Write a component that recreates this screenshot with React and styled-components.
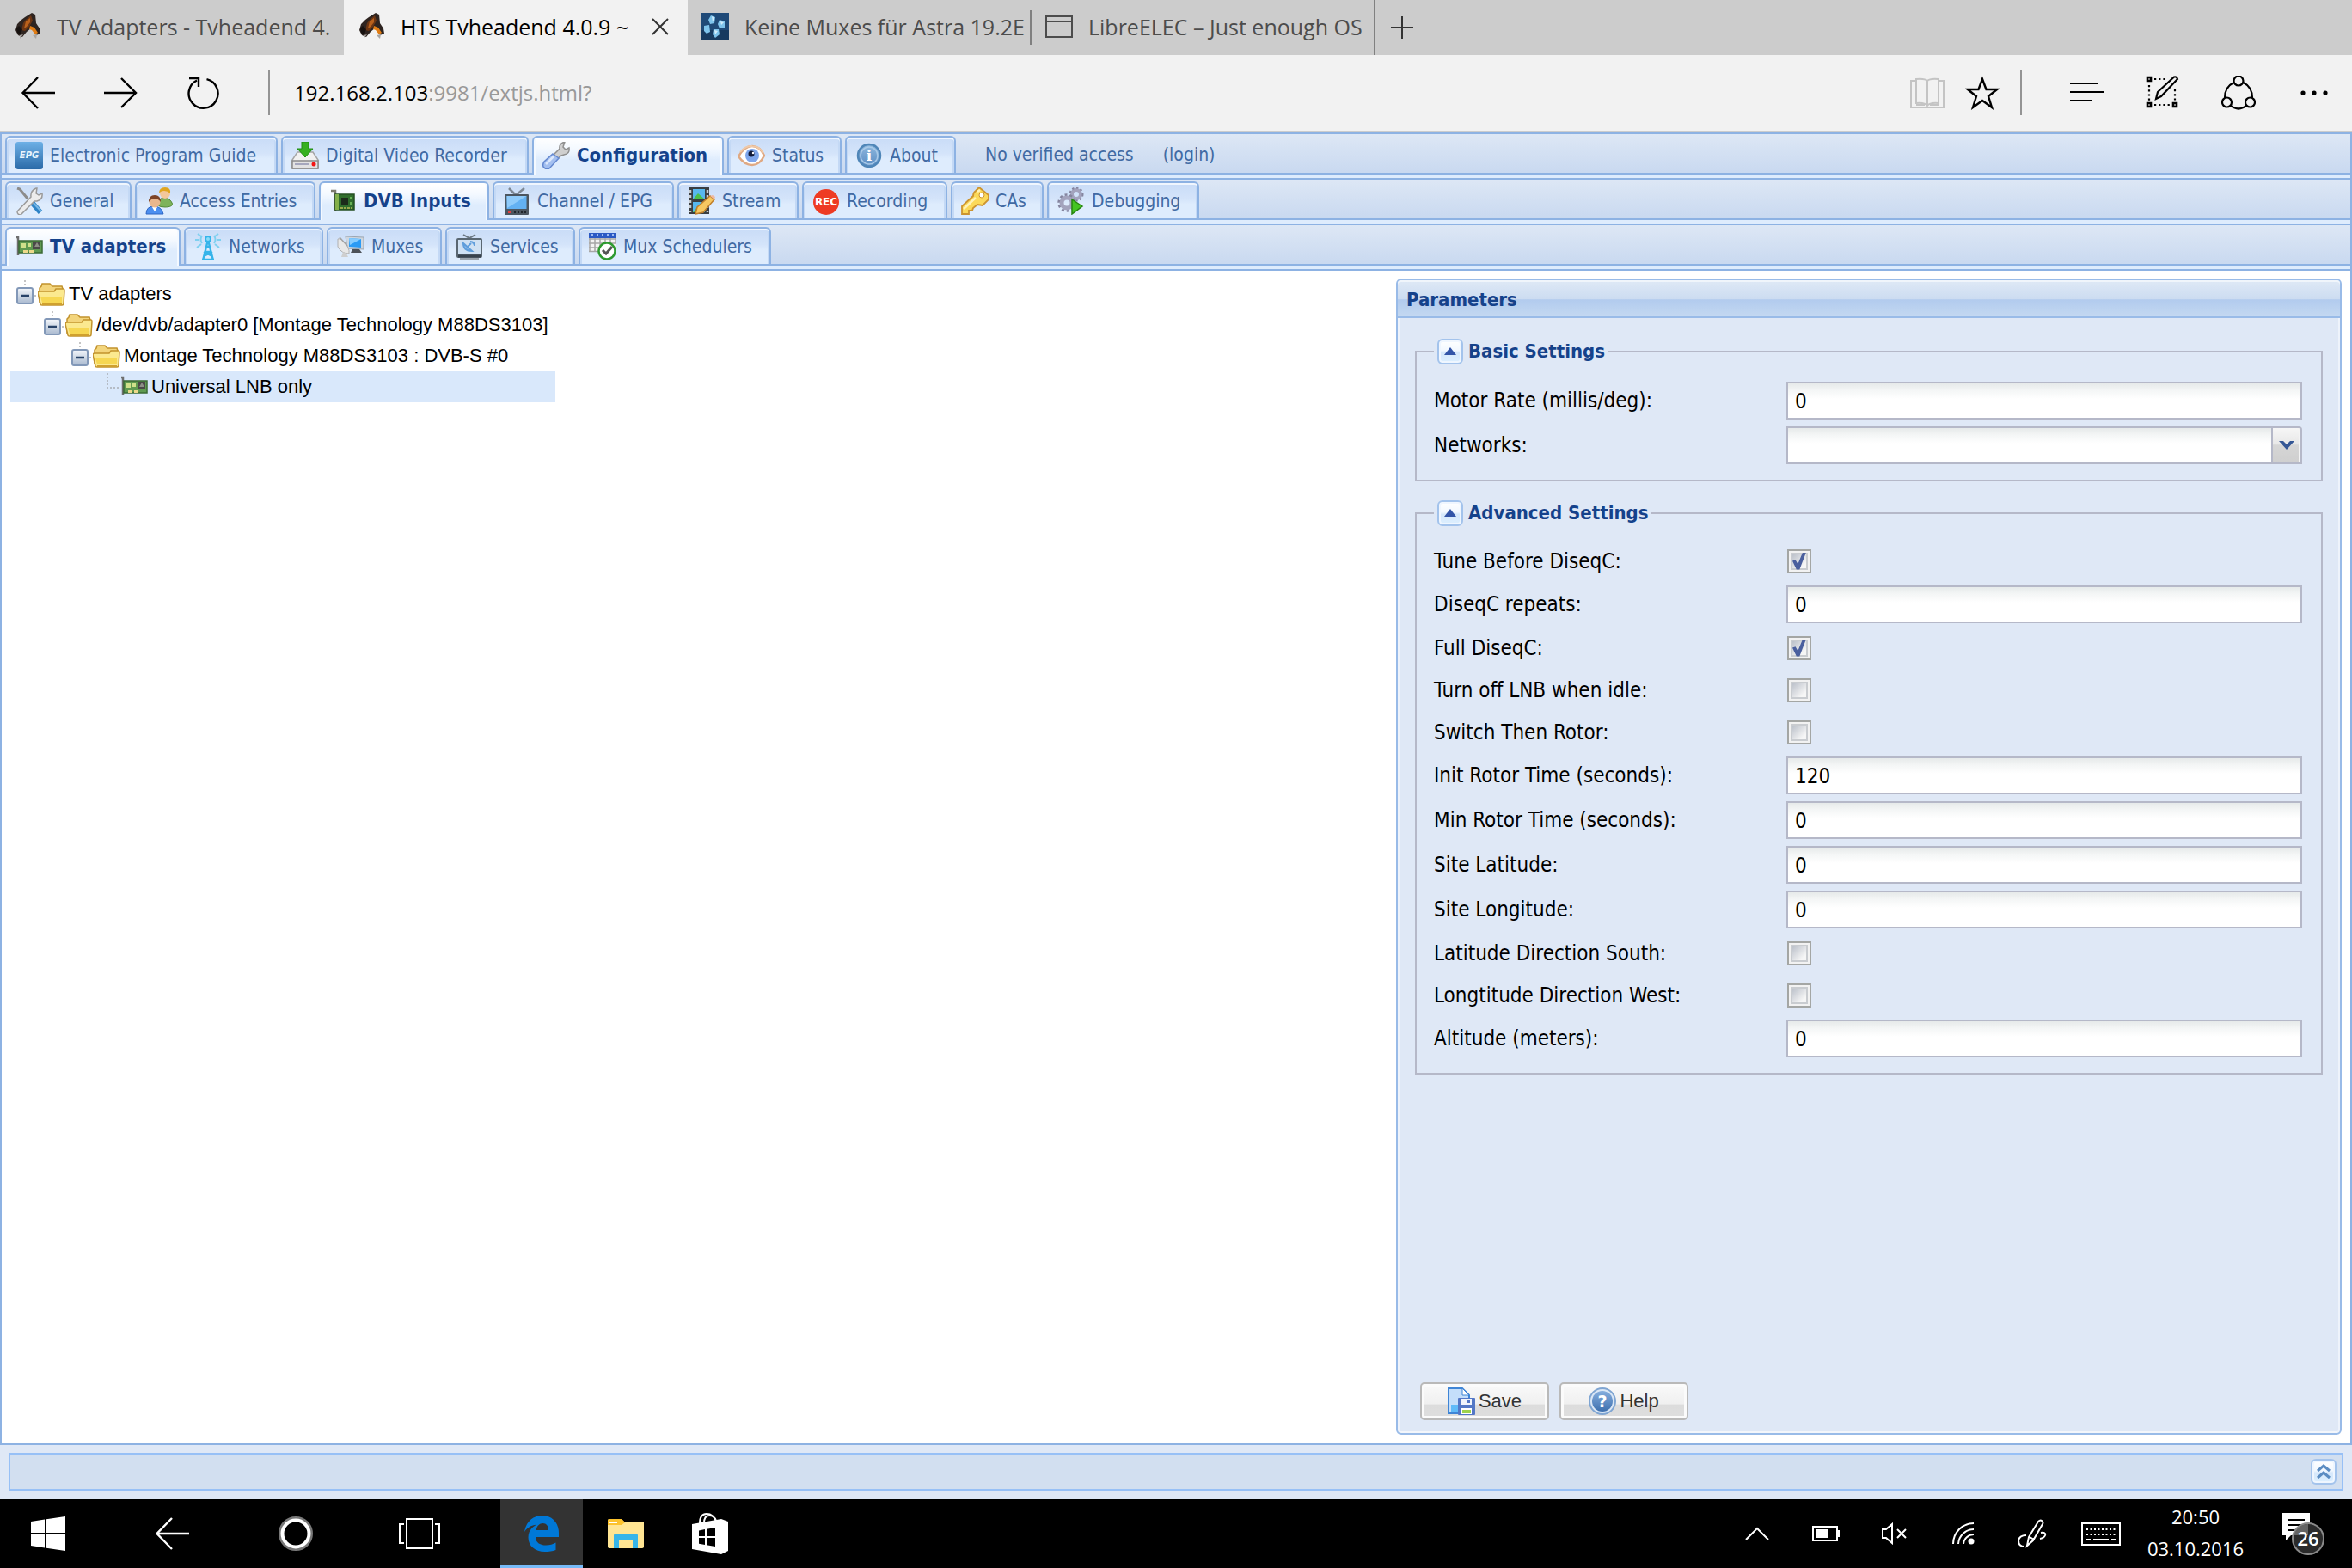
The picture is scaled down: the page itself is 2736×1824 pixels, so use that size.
import React, { useState } from "react";
import styled, { createGlobalStyle, css } from "styled-components";

const segoe = '"Open Sans", "Noto Sans", sans-serif';
const tahoma = '"DejaVu Sans Condensed", "DejaVu Sans", sans-serif';
const arial = '"Liberation Sans", Arial, sans-serif';

const c = {
  line: "#8db2e3",
  frame: "#99bbe8",
  pale: "#deecfd",
  body: "#dfe8f6",
  fieldLine: "#b5b8c8",
  tabText: "#416aa3",
  title: "#15428b",
};

const GlobalStyle = createGlobalStyle`
  *, *::before, *::after { box-sizing: border-box; }
  body { margin: 0; background: #fff; }
  button, input, select { font: inherit; color: inherit; margin: 0; }
  button { border: 0; background: none; padding: 0; }
  svg { display: block; flex: none; }
`;

const Page = styled.div`
  display: flex;
  flex-direction: column;
  min-height: 100vh;
  font-family: ${tahoma};
`;

/* ---------- browser window ---------- */

const TabStrip = styled.nav`
  display: flex;
  height: 64px;
  background: #cccccc;
  font: 25px/34px ${segoe};
`;

const BrowserTab = styled.div`
  display: flex;
  align-items: center;
  flex: 0 0 400px;
  min-width: 0;
  padding: 0 8px 2px 16px;
  background: ${(p) => (p.$active ? "#f2f2f2" : "transparent")};
  color: ${(p) => (p.$active ? "#000" : "#4c4c4c")};
`;

const BrowserTabTitle = styled.span`
  flex: 1;
  min-width: 0;
  margin-left: 18px;
  overflow: hidden;
  white-space: nowrap;
`;

const CloseTab = styled.button`
  display: grid;
  place-items: center;
  width: 48px;
  height: 32px;
`;

const StripDivider = styled.span`
  flex: none;
  width: 2px;
  margin-left: -2px;
  height: ${(p) => (p.$full ? "64px" : "40px")};
  align-self: center;
  background: #808080;
`;

const NewTab = styled.button`
  display: grid;
  place-items: center;
  width: 62px;
  height: 64px;
`;

const AddressBar = styled.header`
  display: flex;
  align-items: center;
  height: 90px;
  padding: 0 24px;
  background: #f2f2f2;
  border-bottom: 2px solid #cccccc;
`;

const NavButtons = styled.div`
  display: flex;
  gap: 56px;
`;

const ActionButtons = styled.div`
  display: flex;
  gap: ${(p) => (p.$tight ? "24px" : "48px")};
`;

const BarIcon = styled.button`
  width: 40px;
  height: 40px;
`;

const BarDivider = styled.span`
  width: 2px;
  height: 52px;
  margin: 0 ${(p) => (p.$wide ? "56px" : "28px")} 0 ${(p) => (p.$wide ? "24px" : "56px")};
  background: #949494;
`;

const Url = styled.div`
  flex: 1;
  font: 24px/34px ${segoe};
  color: #999;
  b { font-weight: 400; color: #000; }
`;

/* ---------- web application ---------- */

const AppFrame = styled.div`
  flex: 1;
  display: flex;
  flex-direction: column;
  border: 2px solid ${c.line};
`;

const TabBar = styled.nav`
  display: flex;
  align-items: flex-end;
  gap: 4px;
  height: 47px;
  padding: 0 4px;
  background: linear-gradient(#dde7f5, #c9d9f0);
  border-bottom: 2px solid ${c.line};
  font-size: 21px;
  line-height: 28px;
  color: ${c.tabText};
`;

const TabGap = styled.div`
  height: 6px;
  background: ${c.pale};
  border-bottom: 2px solid ${c.line};
`;

const activeTab = css`
  height: 45px;
  margin-bottom: -2px;
  padding-bottom: 2px;
  background: linear-gradient(#ffffff, #f4f9ff 30%, ${c.pale} 60%);
  box-shadow: inset 2px 0 #f4f9ff, inset -2px 0 #f4f9ff;
  color: ${c.title};
  font-weight: 700;
  font-size: 22px;
`;

const Tab = styled.button`
  display: flex;
  align-items: center;
  gap: 8px;
  flex: 0 0 ${(p) => p.$width}px;
  height: 43px;
  padding: 0 0 0 10px;
  border: 2px solid ${c.line};
  border-bottom: 0;
  border-radius: 6px 6px 0 0;
  box-shadow: inset 0 2px #f0f6fe, inset 2px 0 #c4d9f5, inset -2px 0 #c4d9f5;
  background: linear-gradient(#c9dcf7, #d4e4fa 45%, ${c.pale} 60%);
  white-space: nowrap;
  ${(p) => p.$active && activeTab}
`;

const AccessNote = styled.div`
  display: flex;
  gap: 34px;
  align-items: center;
  height: 43px;
  padding-left: 30px;
  a { color: inherit; text-decoration: none; }
`;

const Workspace = styled.main`
  flex: 1;
  display: grid;
  grid-template-columns: minmax(0, 1600fr) minmax(0, 1100fr);
  gap: 12px;
  padding: 9px 10px 10px;
  background: #fff;
`;

const Tree = styled.ul`
  list-style: none;
  align-self: start;
  justify-self: start;
  margin: 0;
  padding: 0;
  font: 22px/36px ${arial};
`;

const TreeRow = styled.li`
  display: flex;
  align-items: center;
  height: 36px;
  padding: 0 8px 0 ${(p) => p.$depth * 32}px;
  white-space: nowrap;
  background: ${(p) => (p.$selected ? "#d9e8fb" : "transparent")};
  svg + span { margin-left: 4px; }
`;

const Panel = styled.section`
  display: flex;
  flex-direction: column;
  border: 2px solid ${c.frame};
  border-radius: 6px;
  background: ${c.body};
  box-shadow: inset 2px 0 #eef3fb, inset -2px 0 #eef3fb, inset 0 -2px #f3f6fb;
`;

const PanelTitle = styled.h1`
  margin: 0;
  padding: 0 10px;
  height: 44px;
  border-bottom: 2px solid ${c.frame};
  border-radius: 4px 4px 0 0;
  box-shadow: inset 0 2px #f0f5fb;
  background: linear-gradient(#dfe9f6, #ccdcf1 52%, #b2cbee 54%, #c3d8f1);
  font-size: 22px;
  line-height: 46px;
  font-weight: 700;
  color: ${c.title};
`;

const Form = styled.form`
  flex: 1;
  display: flex;
  flex-direction: column;
  gap: 22px;
  padding: 24px 20px 15px;
`;

const Group = styled.fieldset`
  min-width: 0;
  margin: 0;
  padding: 20px 22px 18px 20px;
  border: 2px solid ${c.fieldLine};
`;

const GroupTitle = styled.legend`
  display: flex;
  align-items: center;
  gap: 6px;
  height: 30px;
  padding: 0 4px;
  font-size: 22px;
  line-height: 30px;
  font-weight: 700;
  color: ${c.title};
`;

const ToolButton = styled.button`
  display: grid;
  place-items: center;
  width: 30px;
  height: 30px;
  border: 2px solid #a3c3ec;
  border-radius: 6px;
  box-shadow: inset 0 0 0 2px #eff6ff;
  background: linear-gradient(#fff, #f2f8ff 45%, #d6e8fb 55%, #dcefff);
`;

const Fields = styled.div`
  display: flex;
  flex-direction: column;
  gap: 8px;
`;

const Row = styled.div`
  display: flex;
  align-items: center;
  height: ${(p) => (p.$check ? "41px" : "44px")};
  font-size: 24px;
  line-height: 30px;
  label { flex: 0 0 410px; }
`;

const fieldBox = css`
  flex: 1;
  min-width: 0;
  height: 44px;
  border: 2px solid ${c.fieldLine};
  border-radius: 0;
  background: linear-gradient(#e6eaea, #f4f6f6 8px, #fff 18px);
  outline: 0;
`;

const TextField = styled.input`
  ${fieldBox}
  padding: 2px 8px 0;
`;

const DropDown = styled.select`
  ${fieldBox}
  appearance: none;
  padding: 0 8px;
`;

const Trigger = styled.span`
  display: grid;
  place-items: center;
  width: 34px;
  height: 44px;
  border: 2px solid ${c.fieldLine};
  border-left: 0;
  border-top-right-radius: 4px;
  box-shadow: inset -2px 0 #f4f4f4;
  background: linear-gradient(#f6f6f6, #e8e8e8 45%, #d6d6d6 50%, #cfcfcf);
`;

const CheckBox = styled.input`
  appearance: none;
  display: grid;
  place-items: center;
  width: 28px;
  height: 28px;
  margin: 0 0 0 1px;
  border: 2px solid #a4a6a4;
  box-shadow: inset 0 0 0 2px #f2f2f2, inset 0 0 0 4px #c9ccd0;
  background: linear-gradient(135deg, #bfc4cd 20%, #f6f6f6 70%);
  &:checked::before {
    content: "";
    width: 16px;
    height: 20px;
    background: #4a5f9e;
    clip-path: polygon(0 50%, 22% 44%, 40% 68%, 74% 2%, 100% 0, 52% 100%, 30% 100%);
  }
`;

const Actions = styled.div`
  display: flex;
  gap: 12px;
  margin-top: auto;
  padding-left: 6px;
`;

const ActionButton = styled.button`
  display: flex;
  align-items: center;
  justify-content: center;
  gap: 4px;
  width: 150px;
  height: 44px;
  border: 2px solid #b9b9b9;
  border-radius: 5px;
  box-shadow: inset 0 0 0 3px #fbfbfb;
  background: linear-gradient(#fafafa, #efefef 58%, #dcdcdc 60%, #dedede);
  font: 22px/28px ${arial};
  color: #333;
`;

const Footer = styled.footer`
  padding: 9px 10px 10px;
  background: ${c.body};
`;

const LogBar = styled.div`
  display: flex;
  align-items: center;
  justify-content: flex-end;
  height: 44px;
  padding-right: 6px;
  border: 2px solid #97c0f6;
  background: #d2dff0;
`;

/* ---------- windows taskbar ---------- */

const Taskbar = styled.footer`
  display: flex;
  height: 80px;
  background: #000;
  color: #fff;
`;

const TaskButton = styled.button`
  display: grid;
  place-items: center;
  width: ${(p) => p.$width}px;
  height: 80px;
`;

const AppButton = styled(TaskButton)`
  background: ${(p) => (p.$open ? "#333" : "transparent")};
  box-shadow: ${(p) => (p.$open ? "inset 0 -4px #76b9f7" : "none")};
`;

const StartGroup = styled.div`
  display: flex;
  gap: ${(p) => p.$gap}px;
`;

const Pinned = styled.div`
  display: flex;
  gap: 2px;
  margin-left: 22px;
`;

const Tray = styled.div`
  display: flex;
  margin-left: auto;
`;

const Clock = styled.time`
  display: flex;
  flex-direction: column;
  justify-content: center;
  width: 140px;
  height: 80px;
  padding-bottom: 2px;
  text-align: center;
  font: 22px/37px ${segoe};
`;

/* ---------- drawings ---------- */

const Ico = ({ s = 32, w, h, box, children, ...r }) => (
  <svg width={w || s} height={h || s} viewBox={box || `0 0 ${w || s} ${h || s}`} fill="none" aria-hidden="true" {...r}>
    {children}
  </svg>
);

const Grad = ({ id, a, b }) => (
  <linearGradient id={id} x1="0" y1="0" x2="0" y2="1">
    <stop offset="0" stopColor={a} />
    <stop offset="1" stopColor={b} />
  </linearGradient>
);

const Hawk = () => (
  <Ico>
    <path d="M13 5l8-5 4 2 1 10 4 6 1 6-5 2-2-4-4-4-5 4-5 6-5-2-3-6 2-7 5-5z" fill="#2e2420" />
    <path d="M14 8l6-5 2 6-4 7-5 5-4-1 2-8z" fill="#6b3513" />
    <path d="M19 15l5 2 4 6-3 2-4-5-3-1z" fill="#e07c14" />
    <path d="M14 10l5-4 0 5-4 5-3 2z" fill="#b9611c" />
    <path d="M3 18l3-3 4 4-2 6-4-2z" fill="#16110f" />
    <path d="M7 26l4-1-4 5zM22 26l5-1-1 5z" fill="#a9a5a2" />
  </Ico>
);
const Kodi = () => (
  <Ico>
    <rect width="32" height="32" fill="#1f4a78" />
    <rect y="20" width="32" height="12" fill="#173a5f" />
    <g fill="#7fc4ec">
      <path d="M11 3l5 2-1 7-5 1-2-5z" />
      <path d="M21 8l6 2v7l-6 1-2-5z" />
      <path d="M3 15l6-1 1 8-4 2-3-3z" />
      <path d="M14 19l6 0 1 6-5 4-3-4z" />
    </g>
    <path d="M12 4l3 2-2 4zM22 10l4 1-3 3zM15 20l4 1-3 4z" fill="#d3edfb" />
  </Ico>
);
const BlankPage = () => (
  <Ico stroke="#4c4c4c" strokeWidth="2">
    <path d="M1 4h30v24H1zM1 10h30" />
  </Ico>
);
const CloseIcon = () => <Ico s={20} stroke="#333" strokeWidth="2"><path d="M1 1l18 18M19 1L1 19" /></Ico>;
const PlusIcon = () => <Ico s={26} stroke="#333" strokeWidth="2"><path d="M13 0v26M0 13h26" /></Ico>;
const ArrowLeft = ({ color = "#000" }) => (
  <Ico s={40} stroke={color} strokeWidth="2.4"><path d="M40 20H3M20 2L2.500 20 20 38" /></Ico>
);
const ArrowRight = () => <Ico s={40} stroke="#000" strokeWidth="2.4"><path d="M1 20h37M21 3l17 17-17 17" /></Ico>;
const Reload = () => (
  <Ico s={40} stroke="#000" strokeWidth="2.4">
    <path d="M24.500 4.200A17 17 0 1 1 13 5.500" />
    <path d="M4 3h11v10" />
  </Ico>
);
const Book = () => (
  <Ico s={40} stroke="#c4c4c4" strokeWidth="2">
    <path d="M6 6H1v31h38V6h-5" />
    <path d="M20 6q-3-3-13-2v28q10-1 13 3 3-4 13-3V4Q23 3 20 6v29M7 34h10M23 34h10" />
  </Ico>
);
const Star = () => (
  <Ico s={40} stroke="#000" strokeWidth="2.4">
    <path d="M20 4l4.500 12H37l-10 8 4 13-11-8-11 8 4-13-10-8h12.500z" />
  </Ico>
);
const HubIcon = () => <Ico s={40} stroke="#000" strokeWidth="2"><path d="M0 9h32M0 19h40M0 29h25" /></Ico>;
const WebNote = () => (
  <Ico s={40} stroke="#000">
    <path d="M2 2h4v4H2zM2 32h4v4H2zM32 32h4v4h-4z" strokeWidth="2.6" />
    <path d="M10 4h14M4 11v18M34 16v14M10 34h20" strokeWidth="2.2" strokeDasharray="2.2 3" />
    <path d="M12 27l2-8L33 1.500q3-1 4 2.500L18 24z" strokeWidth="2.200" />
  </Ico>
);
const Share = () => (
  <Ico s={40} stroke="#000" strokeWidth="2.2">
    <circle cx="20" cy="6" r="5.500" /><circle cx="6.500" cy="31" r="5.500" /><circle cx="33.500" cy="31" r="5.500" />
    <path d="M14.500 8Q4 13 4 26M25.500 8Q36 13 36 26M11 35q9 7 18 0" />
  </Ico>
);
const Dots = () => (
  <Ico s={40} fill="#000"><circle cx="7" cy="20" r="2.600" /><circle cx="20" cy="20" r="2.600" /><circle cx="33" cy="20" r="2.600" /></Ico>
);

const EpgIcon = () => (
  <Ico>
    <defs><Grad id="epg" a="#6db0e6" b="#2a6aa8" /></defs>
    <rect width="32" height="32" rx="3" fill="url(#epg)" />
    <text x="16" y="18.500" textAnchor="middle" fontFamily="DejaVu Sans" fontWeight="700" fontStyle="italic" fontSize="10" fill="#eaf4fc">EPG</text>
  </Ico>
);
const DvrIcon = () => (
  <Ico>
    <path d="M7 12h18l6 9v9q0 2-2 2H3q-2 0-2-2v-9z" fill="#f1f1f1" stroke="#a5a5a5" strokeWidth="1.500" />
    <path d="M1 22h30v9H1z" fill="#e2e2e2" stroke="#8a8a8a" strokeWidth="1.500" />
    <path d="M4 25h17v2H4z" fill="#a5a7bd" />
    <circle cx="26" cy="26" r="2.500" fill="#f31515" />
    <path d="M12 0h8v8h5l-9 10L7 8h5z" fill="#36b020" stroke="#1f8c12" />
  </Ico>
);
const WrenchIcon = () => (
  <Ico>
    <path d="M13 15l7-7q-1-6 6-8l-2 6 3 3 4-2q1 7-6 8l-3 1-5 4z" fill="#cfcfcf" stroke="#8f8f8f" strokeWidth="1.500" />
    <path d="M12 14l7 5L8 31q-4 2-7-2-1-3 1-6z" fill="#a3bff0" stroke="#6488cf" strokeWidth="1.500" />
    <path d="M13 17L4 26" stroke="#dce8fc" strokeWidth="2.500" />
  </Ico>
);
const EyeIcon = () => (
  <Ico>
    <path d="M1 17Q8 5 17 5t14 11q-5 11-14 11T1 17z" fill="#fff" stroke="#dfa983" strokeWidth="2.500" />
    <path d="M3 12Q9 4 17 5q8 0 13 8" stroke="#efc9a8" strokeWidth="2" />
    <circle cx="17" cy="16" r="8" fill="#7ea6ec" /><circle cx="16" cy="14" r="3.500" fill="#111a3a" /><circle cx="18" cy="13" r="1.200" fill="#fff" />
  </Ico>
);
const AboutIcon = () => (
  <Ico>
    <defs><Grad id="about" a="#8fb9df" b="#5a8cc2" /></defs>
    <circle cx="16" cy="16" r="13" fill="url(#about)" stroke="#4f86b8" strokeWidth="2.500" />
    <circle cx="16" cy="16" r="10" stroke="#a9cae8" strokeWidth="1.500" />
    <text x="16" y="22" textAnchor="middle" fontFamily="DejaVu Serif" fontWeight="700" fontSize="17" fill="#fff">i</text>
  </Ico>
);
const HelpIcon = () => (
  <Ico>
    <defs><Grad id="help" a="#86aede" b="#3d6fae" /></defs>
    <circle cx="16" cy="16" r="15" fill="#dbe7f5" stroke="#7fa5d2" strokeWidth="2" />
    <circle cx="16" cy="16" r="12" fill="url(#help)" />
    <text x="16" y="23" textAnchor="middle" fontFamily="DejaVu Sans" fontWeight="700" fontSize="19" fill="#fff">?</text>
  </Ico>
);
const ToolsIcon = () => (
  <Ico>
    <path d="M2 1l3 1 9 11" stroke="#8c8c8c" strokeWidth="3" />
    <path d="M16 14l13 15" stroke="#2d83c6" strokeWidth="6" />
    <path d="M18 15l12 13" stroke="#79b8e6" strokeWidth="2" />
    <path d="M2 28L18 11q-1-7 6-10l1 0-1 6 3 2 4-2q1 7-6 9l-3 0L6 32q-4 0-4-4z" fill="#ececec" stroke="#9a9a9a" strokeWidth="1.500" />
  </Ico>
);
const UsersIcon = () => (
  <Ico>
    <path d="M15 21q0-9 7-9t10 8q-2 3-9 3-6 0-8-2z" fill="#7db35b" stroke="#558a3a" />
    <circle cx="23" cy="7" r="6" fill="#f3c79a" /><path d="M16 7q0-7 7-7t6 7q-3-3-7-3-4 0-6 3z" fill="#e0a51e" />
    <path d="M1 31q0-9 9-9t11 9z" fill="#4c8ff0" stroke="#2e66c4" />
    <path d="M8 23l3 5 3-5z" fill="#fff" />
    <circle cx="11" cy="17" r="6.500" fill="#eab78d" /><path d="M4 17q0-8 7-8t7 8q-3-4-7-4t-7 4z" fill="#7e4425" />
  </Ico>
);
const CardIcon = () => (
  <Ico>
    <path d="M1 5h2v21" stroke="#6f6f6f" strokeWidth="2.500" />
    <rect x="4" y="9" width="27" height="14" fill="#5f9a50" stroke="#3b6a35" strokeWidth="1.500" />
    <rect x="20" y="10" width="9" height="9" fill="#4a4a48" />
    <path d="M22 16l3-5 3 5z" fill="#8d8f86" />
    <path d="M7 12h5v5H7zM14 12h4v4h-4z" fill="#cfe08a" />
    <path d="M9 21.500h14" stroke="#ecd98a" strokeWidth="3" strokeDasharray="5 2" />
  </Ico>
);
const PciIcon = () => (
  <Ico>
    <path d="M2 4h5v24" stroke="#7c7a6c" strokeWidth="2.500" />
    <rect x="7" y="8" width="22" height="18" fill="#2f6d2c" stroke="#244f22" strokeWidth="1.500" />
    <rect x="7" y="8" width="4" height="18" fill="#83b04a" />
    <rect x="14" y="12" width="8" height="9" fill="#1c2b1b" />
    <path d="M24 11h3v3h-3zM24 17h3v3h-3z" fill="#68b255" />
    <path d="M13 24h14" stroke="#98a94c" strokeWidth="2" strokeDasharray="3 1" />
  </Ico>
);
const TvIcon = () => (
  <Ico>
    <path d="M7 1l8 8L25 1" stroke="#7d8894" strokeWidth="2.500" />
    <rect x="2" y="8" width="28" height="24" rx="1" fill="#4c5660" />
    <rect x="4.500" y="10" width="23" height="15" fill="#63b1f2" /><path d="M4.500 10h23L5 24z" fill="#8fcbfa" />
    <path d="M6 29h4" stroke="#e24040" strokeWidth="2" /><path d="M13 29h14" stroke="#20262c" strokeWidth="2" strokeDasharray="2 2" />
  </Ico>
);
const FilmIcon = () => (
  <Ico>
    <rect x="1" y="0" width="24" height="31" fill="#3b3f42" />
    <path d="M3 3v26M23 3v26" stroke="#c9ced2" strokeWidth="2.500" strokeDasharray="3 3" />
    <rect x="6" y="2" width="14" height="12" fill="#58b8ee" /><rect x="6" y="17" width="14" height="12" fill="#58b8ee" />
    <path d="M6 14l6-7 8 7zM6 29l6-7 8 7z" fill="#4cc04a" />
    <path d="M9 31l2-8L26 10l5 4-13 15z" fill="#f7c862" stroke="#c07f2a" strokeWidth="1.500" /><path d="M26 10l5 4 1-3-3-2z" fill="#f0b9a0" />
  </Ico>
);
const RecIcon = () => (
  <Ico>
    <circle cx="16" cy="17" r="15" fill="#ee3b23" />
    <text x="16" y="21" textAnchor="middle" fontFamily="DejaVu Sans" fontWeight="700" fontSize="12" fill="#fff">REC</text>
  </Ico>
);
const KeyIcon = () => (
  <Ico>
    <path d="M1 31v-9l13-12q0-4 3-6l4-4 11 9v5l-7 7-6-1-5 4-1 3H9v4z" fill="#fbd95a" stroke="#cc9430" strokeWidth="1.800" />
    <path d="M3 25L17 12M19 5l3-2" stroke="#fff3b8" strokeWidth="2.500" /><circle cx="24" cy="9" r="3" fill="#fff" stroke="#cc9430" />
  </Ico>
);
const GearsIcon = () => (
  <Ico>
    <circle cx="22" cy="8" r="5" stroke="#a3a3bd" strokeWidth="4" /><circle cx="22" cy="8" r="7.500" stroke="#85859f" strokeWidth="2" strokeDasharray="2.500 2.500" />
    <circle cx="11" cy="18" r="6" stroke="#a3a3bd" strokeWidth="5" /><circle cx="11" cy="18" r="9.500" stroke="#85859f" strokeWidth="2.500" strokeDasharray="3 3" />
    <path d="M17 14l12 8-12 9z" fill="#45c424" stroke="#26850f" strokeWidth="1.500" />
  </Ico>
);
const AntennaIcon = () => (
  <Ico stroke="#35b4ea" strokeWidth="2">
    <path d="M16 8l-6 24M16 8l6 24M12 22h8M13.500 16h5M11 27l10-5M21 27l-10-5M9 31h14" strokeWidth="2.400" />
    <circle cx="16" cy="7" r="3" fill="#8adcf8" />
    <path d="M9 3Q6 8 9 12M23 3q3 5 0 9M4 1l4 3M28 1l-4 3M1 8h5M31 8h-5M3 17l5-4M29 17l-5-4" stroke="#7fd0f0" />
  </Ico>
);
const MuxIcon = () => (
  <Ico>
    <path d="M10 4l21 1v14l-19-1z" fill="#cfd6de" stroke="#9ba6b2" /><path d="M14 6l14 1v10l-14-1z" fill="#2b9bf5" /><path d="M14 6l14 1-13 7z" fill="#86ccff" />
    <path d="M18 19h8l3 4H16z" fill="#4d5259" />
    <path d="M1 7q4-2 11 8 3 6 2 9-9 0-13-8z" fill="#e8e8e8" stroke="#b0b0b0" /><path d="M7 22l-2 6h8l-2-4z" fill="#cfcfcf" />
    <path d="M12 15L3 5" stroke="#a5a5a5" strokeWidth="1.500" />
  </Ico>
);
const ServiceIcon = () => (
  <Ico>
    <path d="M9 2l7 4 7-4" stroke="#6d7983" strokeWidth="2" />
    <rect x="1" y="6" width="30" height="23" rx="2" fill="#5a6772" /><rect x="3" y="8" width="26" height="17" fill="#cfe1f3" />
    <path d="M9 12q0 9 10 9zM14 16l4-4M17 10q5 0 5 5" stroke="#5f9edb" strokeWidth="2" fill="#8dbcec" />
    <path d="M3 27h26" stroke="#38434d" strokeWidth="3" /><path d="M5 30h22" stroke="#9aa3ab" strokeWidth="2" />
  </Ico>
);
const CalendarIcon = () => (
  <Ico>
    <rect x="0" y="0" width="31" height="22" fill="#f3f3f3" />
    <path d="M0 7h31M0 12h31M0 17h22M0 21.500h12M1 6v16M7 6v16M13 6v14M19 6v8M25 6v6M31 6v6" stroke="#a6a6a6" strokeWidth="1.500" />
    <rect width="32" height="6" fill="#2a59c4" /><path d="M3 2h28" stroke="#9dbaf2" strokeWidth="2" strokeDasharray="2 4" />
    <circle cx="21" cy="21" r="9.500" fill="#fff" stroke="#2e9a30" strokeWidth="2.500" /><path d="M16 20l4 4 7-8" stroke="#555" strokeWidth="3" />
  </Ico>
);
const SaveIcon = () => (
  <Ico>
    <path d="M1 1h16l8 8v21H1z" fill="#c4defa" stroke="#3f85d6" strokeWidth="2" /><path d="M17 1l8 8h-8z" fill="#fff" stroke="#3f85d6" />
    <path d="M4 20h9v8H4z" fill="#5fbaf8" />
    <rect x="12" y="12" width="20" height="20" rx="1" fill="#5377c6" /><path d="M16 13h12v7H16z" fill="#f0f4fc" /><path d="M23 14h3v4h-3z" fill="#5377c6" />
    <path d="M16 24h12v7H16z" fill="#fff" /><path d="M17 26h10v4H17z" fill="#9ed24c" />
  </Ico>
);

const Minus = () => (
  <Ico>
    <defs><Grad id="box" a="#f4f7fb" b="#a9b9cf" /></defs>
    <path d="M17 0v8M28 18h4" stroke="#c4c4c4" strokeWidth="2" strokeDasharray="2 2" />
    <rect x="8" y="9" width="18" height="18" rx="2" fill="url(#box)" stroke="#8298b8" strokeWidth="2" />
    <path d="M12 18h10" stroke="#274268" strokeWidth="2.500" />
  </Ico>
);
const Elbow = () => (
  <Ico><path d="M17 0v17h15" stroke="#b5bcc6" strokeWidth="2" strokeDasharray="2 2" /></Ico>
);
const Folder = () => (
  <Ico>
    <path d="M2 25V9l2-2 1-3h9l3 3h11l1 3v6z" fill="#f3d57c" stroke="#c2922c" strokeWidth="1.500" />
    <path d="M3 28L0 15q0-2 2-2h17l2-3h9q1 0 1 2l-1 15q0 2-2 2H5q-2 0-2-1z" fill="#fbe98f" stroke="#c2922c" strokeWidth="1.500" />
    <path d="M3 19h25l0 7H5z" fill="#f6d752" /><path d="M5 28h23" stroke="#cfa02e" strokeWidth="2" />
  </Ico>
);
const TriangleUp = () => <Ico w={16} h={10}><path d="M8 0l7 9H1z" fill="#3355a8" /></Ico>;
const Chevron = () => <Ico w={18} h={12}><path d="M0 1h5l4 4 4-4h5L9 11z" fill="#355795" /></Ico>;
const DoubleUp = () => <Ico w={16} h={18} stroke="#5b8cc2" strokeWidth="3"><path d="M1 8l7-6 7 6M1 16l7-6 7 6" /></Ico>;

const WinLogo = () => (
  <Ico s={40} fill="#fff"><path d="M0 6l16-2.500V19H0zM18 3.200L40 0v19H18zM0 21h16v15.500L0 34zM18 21h22v19l-22-3.200z" /></Ico>
);
const Cortana = () => <Ico s={40}><circle cx="20" cy="20" r="18.500" stroke="#777" strokeWidth="3" /><circle cx="20" cy="20" r="15.500" stroke="#fff" strokeWidth="4" /></Ico>;
const TaskView = () => <Ico w={48} h={36} stroke="#fff" strokeWidth="2"><path d="M9 1h30v34H9zM6 7H1v22h5M42 7h5v22h-5" /></Ico>;
const EdgeIcon = () => (
  <Ico w={40} h={42}>
    <path d="M0 19C2 7 10 0 20.500 0 33 0 40 9 40 20v5H13c0 7 6 9.500 12 9.500 5 0 8-1 11.500-3V40c-4 1.500-8 2-12.500 2C12 42 4.500 35 4.500 25.500 4.500 18 9 13 14.500 10.500 8 11 3 14 0 19zM13.500 17H28c0-5-2.500-8-6.500-8-4 0-7 3-8 8z" fill="#0078d7" />
  </Ico>
);
const Explorer = () => (
  <Ico w={42} h={34}>
    <path d="M0 2q0-2 2-2h14l4 4h22v28q0 2-2 2H2q-2 0-2-2z" fill="#ffe593" /><path d="M0 2q0-2 2-2h14l4 4-4 3H0z" fill="#fcc22d" />
    <path d="M2 3h9v2H2z" fill="#fff" /><path d="M7 34V19q0-2 2-2h24q2 0 2 2v15h-6V24H13v10z" fill="#37b5e9" />
  </Ico>
);
const Store = () => (
  <Ico w={42} h={48}>
    <path d="M9 12Q9 1 17 1t11 9M14 12Q14 3 20 3t8 6" stroke="#fff" strokeWidth="2" />
    <path d="M0 13l34-6 8 3v34l-8 4-34-6z" fill="#fff" />
    <path d="M8 20.500l7-1.500v8H8zM17 18.700l10-1.700v10H17zM8 29h7v8l-7-1.300zM17 29h10v10l-10-1.700z" fill="#000" />
  </Ico>
);
const TrayUp = () => <Ico w={28} h={16} stroke="#fff" strokeWidth="2"><path d="M1 15L14 2l13 13" /></Ico>;
const Battery = () => <Ico w={32} h={20} stroke="#fff" strokeWidth="2"><path d="M1 2h28v16H1z" /><path d="M5 5h13v10H5z" fill="#fff" stroke="none" /><path d="M31 6v8" /></Ico>;
const Mute = () => <Ico w={30} h={26} stroke="#fff" strokeWidth="2"><path d="M1 8h4l7-6v22l-7-6H1zM18 8l10 10M28 8L18 18" /></Ico>;
const Wifi = () => (
  <Ico s={26} stroke="#fff" strokeWidth="2"><path d="M1 25A24 24 0 0 1 25 1M7 25A18 18 0 0 1 25 8M13 25A12 12 0 0 1 25 14" /><circle cx="22" cy="22" r="3.500" fill="#fff" stroke="none" /></Ico>
);
const Pen = () => (
  <Ico w={34} h={34} stroke="#fff" strokeWidth="2"><path d="M11 31l2-10L24 3q3-3 5 0 1 1 0 3L18 25zM14 21l5 3M10 19q-8 0-9 6 0 7 7 7M27 16q6-1 5 3-1 3-6 4" /></Ico>
);
const Keyboard = () => (
  <Ico w={46} h={27} stroke="#fff" strokeWidth="2"><path d="M1 1h44v25H1z" /><path d="M6 8h34M6 14h34" strokeDasharray="2 2.500" /><path d="M6 20h5M14 20h18M35 20h5" /></Ico>
);
const Notices = () => (
  <Ico w={54} h={52}>
    <path d="M2 2h32v26H12l-6 6v-6H2z" fill="#fff" /><path d="M8 10h20M8 16h20M8 22h14" stroke="#000" strokeWidth="2" />
    <circle cx="32" cy="32" r="18" fill="#2b2b2b" stroke="#8a8a8a" strokeWidth="2" />
    <path d="M15 26A18 18 0 0 1 32 15v13H14z" fill="#8a8a8a" opacity=".6" />
    <text x="32" y="40" textAnchor="middle" fontFamily="Open Sans" fontWeight="600" fontSize="22" fill="#fff">26</text>
  </Ico>
);

/* ---------- content ---------- */

const mainTabs = [
  ["Electronic Program Guide", <EpgIcon />, 317],
  ["Digital Video Recorder", <DvrIcon />, 288],
  ["Configuration", <WrenchIcon />, 223, true],
  ["Status", <EyeIcon />, 133],
  ["About", <AboutIcon />, 129],
];
const configTabs = [
  ["General", <ToolsIcon />, 147],
  ["Access Entries", <UsersIcon />, 210],
  ["DVB Inputs", <PciIcon />, 198, true],
  ["Channel / EPG", <TvIcon />, 211],
  ["Stream", <FilmIcon />, 141],
  ["Recording", <RecIcon />, 169],
  ["CAs", <KeyIcon />, 108],
  ["Debugging", <GearsIcon />, 177],
];
const inputTabs = [
  ["TV adapters", <CardIcon />, 204, true],
  ["Networks", <AntennaIcon />, 162],
  ["Muxes", <MuxIcon />, 134],
  ["Services", <ServiceIcon />, 151],
  ["Mux Schedulers", <CalendarIcon />, 224],
];
const treeNodes = [
  "TV adapters",
  "/dev/dvb/adapter0 [Montage Technology M88DS3103]",
  "Montage Technology M88DS3103 : DVB-S #0",
];
const basic = [
  { label: "Motor Rate (millis/deg):", value: "0" },
  { label: "Networks:", kind: "select" },
];
const advanced = [
  { label: "Tune Before DiseqC:", kind: "check", value: true },
  { label: "DiseqC repeats:", value: "0" },
  { label: "Full DiseqC:", kind: "check", value: true },
  { label: "Turn off LNB when idle:", kind: "check", value: false },
  { label: "Switch Then Rotor:", kind: "check", value: false },
  { label: "Init Rotor Time (seconds):", value: "120" },
  { label: "Min Rotor Time (seconds):", value: "0" },
  { label: "Site Latitude:", value: "0" },
  { label: "Site Longitude:", value: "0" },
  { label: "Latitude Direction South:", kind: "check", value: false },
  { label: "Longtitude Direction West:", kind: "check", value: false },
  { label: "Altitude (meters):", value: "0" },
];

const TabRow = ({ tabs, children }) => (
  <>
    <TabBar>
      {tabs.map(([name, icon, width, active]) => (
        <Tab key={name} type="button" $width={width} $active={active}>
          {icon}
          <span>{name}</span>
        </Tab>
      ))}
      {children}
    </TabBar>
    <TabGap />
  </>
);

const Field = ({ id, label, kind, value }) => (
  <Row $check={kind === "check"}>
    <label htmlFor={id}>{label}</label>
    {kind === "check" && <CheckBox id={id} type="checkbox" defaultChecked={value} />}
    {kind === "select" && (
      <>
        <DropDown id={id} defaultValue=""><option value="" /></DropDown>
        <Trigger><Chevron /></Trigger>
      </>
    )}
    {!kind && <TextField id={id} type="text" defaultValue={value} />}
  </Row>
);

const Section = ({ title, name, fields }) => {
  const [open, setOpen] = useState(true);
  return (
    <Group>
      <GroupTitle>
        <ToolButton type="button" aria-label={title} onClick={() => setOpen(!open)}><TriangleUp /></ToolButton>
        {title}
      </GroupTitle>
      {open && <Fields>{fields.map((f, i) => <Field key={f.label} id={`${name}-${i}`} {...f} />)}</Fields>}
    </Group>
  );
};

export default function App() {
  return (
    <Page>
      <GlobalStyle />
      <TabStrip>
        <BrowserTab><Hawk /><BrowserTabTitle>TV Adapters - Tvheadend 4.</BrowserTabTitle></BrowserTab>
        <BrowserTab $active>
          <Hawk /><BrowserTabTitle>HTS Tvheadend 4.0.9 ~</BrowserTabTitle>
          <CloseTab aria-label="Close"><CloseIcon /></CloseTab>
        </BrowserTab>
        <BrowserTab><Kodi /><BrowserTabTitle>Keine Muxes für Astra 19.2E</BrowserTabTitle></BrowserTab>
        <StripDivider />
        <BrowserTab><BlankPage /><BrowserTabTitle>LibreELEC – Just enough OS</BrowserTabTitle></BrowserTab>
        <StripDivider $full />
        <NewTab aria-label="New tab"><PlusIcon /></NewTab>
      </TabStrip>
      <AddressBar>
        <NavButtons>
          <BarIcon aria-label="Back"><ArrowLeft /></BarIcon>
          <BarIcon aria-label="Forward"><ArrowRight /></BarIcon>
          <BarIcon aria-label="Refresh"><Reload /></BarIcon>
        </NavButtons>
        <BarDivider />
        <Url><b>192.168.2.103</b>:9981/extjs.html?</Url>
        <ActionButtons $tight>
          <BarIcon aria-label="Reading view"><Book /></BarIcon>
          <BarIcon aria-label="Favourite"><Star /></BarIcon>
        </ActionButtons>
        <BarDivider $wide />
        <ActionButtons>
          <BarIcon aria-label="Hub"><HubIcon /></BarIcon>
          <BarIcon aria-label="Web note"><WebNote /></BarIcon>
          <BarIcon aria-label="Share"><Share /></BarIcon>
          <BarIcon aria-label="More"><Dots /></BarIcon>
        </ActionButtons>
      </AddressBar>

      <AppFrame>
        <TabRow tabs={mainTabs}>
          <AccessNote><span>No verified access</span><a href="#login">(login)</a></AccessNote>
        </TabRow>
        <TabRow tabs={configTabs} />
        <TabRow tabs={inputTabs} />
        <Workspace>
          <Tree>
            {treeNodes.map((name, depth) => (
              <TreeRow key={name} $depth={depth}><Minus /><Folder /><span>{name}</span></TreeRow>
            ))}
            <TreeRow $depth={3} $selected><Elbow /><CardIcon /><span>Universal LNB only</span></TreeRow>
          </Tree>
          <Panel>
            <PanelTitle>Parameters</PanelTitle>
            <Form onSubmit={(e) => e.preventDefault()}>
              <Section title="Basic Settings" name="basic" fields={basic} />
              <Section title="Advanced Settings" name="advanced" fields={advanced} />
              <Actions>
                <ActionButton type="submit"><SaveIcon />Save</ActionButton>
                <ActionButton type="button"><HelpIcon />Help</ActionButton>
              </Actions>
            </Form>
          </Panel>
        </Workspace>
      </AppFrame>
      <Footer>
        <LogBar><ToolButton type="button" aria-label="Expand"><DoubleUp /></ToolButton></LogBar>
      </Footer>

      <Taskbar>
        <StartGroup $gap={16}>
          <TaskButton $width={112} aria-label="Start"><WinLogo /></TaskButton>
          <StartGroup $gap={0}>
            <TaskButton $width={144} aria-label="Back"><ArrowLeft color="#fff" /></TaskButton>
            <TaskButton $width={144} aria-label="Cortana"><Cortana /></TaskButton>
            <TaskButton $width={144} aria-label="Task view"><TaskView /></TaskButton>
          </StartGroup>
        </StartGroup>
        <Pinned>
          <AppButton $width={96} $open aria-label="Edge"><EdgeIcon /></AppButton>
          <AppButton $width={96} aria-label="Explorer"><Explorer /></AppButton>
          <AppButton $width={96} aria-label="Store"><Store /></AppButton>
        </Pinned>
        <Tray>
          <TaskButton $width={80} aria-label="Hidden icons"><TrayUp /></TaskButton>
          <TaskButton $width={80} aria-label="Battery"><Battery /></TaskButton>
          <TaskButton $width={80} aria-label="Volume"><Mute /></TaskButton>
          <TaskButton $width={80} aria-label="Network"><Wifi /></TaskButton>
          <TaskButton $width={80} aria-label="Pen"><Pen /></TaskButton>
          <TaskButton $width={80} aria-label="Keyboard"><Keyboard /></TaskButton>
          <Clock><span>20:50</span><span>03.10.2016</span></Clock>
          <TaskButton $width={112} aria-label="Notifications"><Notices /></TaskButton>
        </Tray>
      </Taskbar>
    </Page>
  );
}
